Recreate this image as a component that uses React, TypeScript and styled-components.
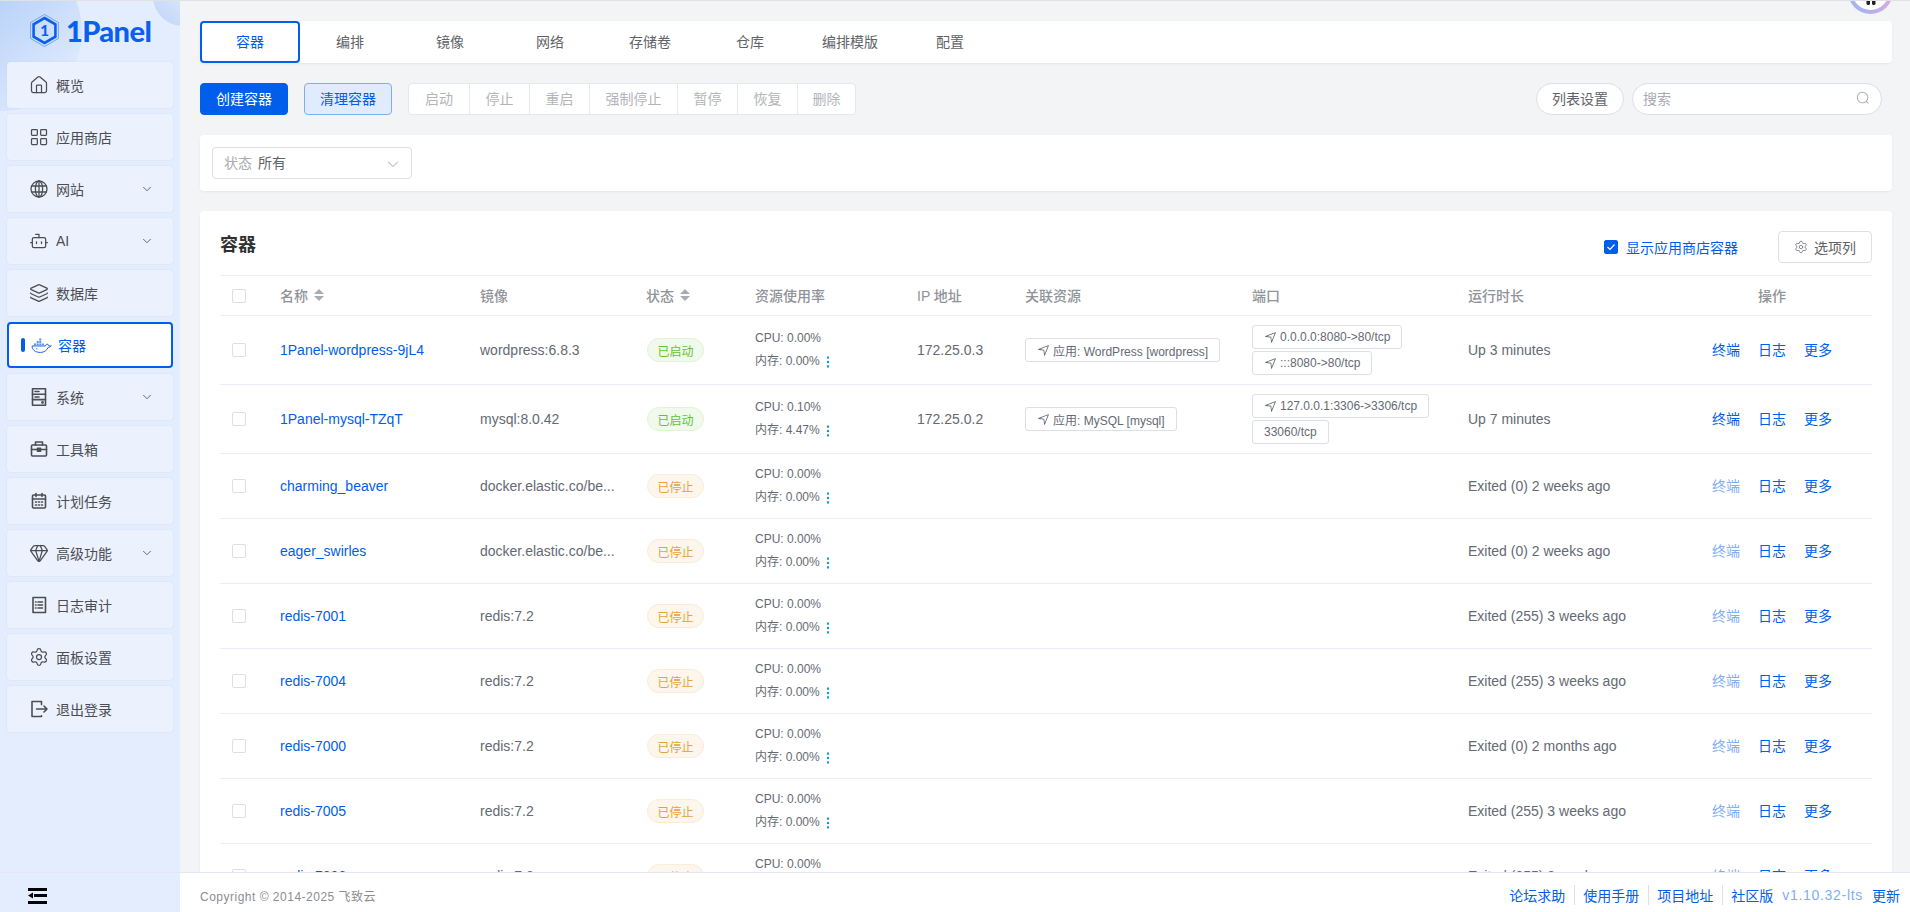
import React from 'react';
import styled, { createGlobalStyle } from 'styled-components';
import { House, LayoutGrid, Bot, Layers, Gem, Settings, ChevronDown } from 'lucide-react';

const Global = createGlobalStyle`
  * { box-sizing: border-box; }
  html, body { margin: 0; height: 100%; }
  body { font-family: "Liberation Sans", "Noto Sans CJK SC", sans-serif; font-size: 14px; color: #646a73; overflow: hidden; }
`;

const Shell = styled.div`
  height: 912px; display: flex; flex-direction: column; position: relative; overflow: hidden;
  border-top: 1px solid #dfe1e5; background: #f3f4f5;
`;
const Body = styled.div`display: flex; flex: 1; min-height: 0;`;
const Sidebar = styled.aside`
  width: 180px; flex: none; background: #e3edfd; position: relative; overflow: hidden;
  padding: 0 7px;
  &::before { content: ""; position: absolute; left: -78px; top: -50px; width: 160px; height: 160px; border-radius: 50%;
    background: linear-gradient(135deg, #a9c9f8 20%, #e2ecfd 90%); }
  &::after { content: ""; position: absolute; left: 153px; top: -35px; width: 60px; height: 60px; border-radius: 50%;
    background: linear-gradient(45deg, #c3d7f9 10%, #e3edfd 70%); }
`;
const Logo = styled.div`
  position: relative; z-index: 1; height: 61px; display: flex; align-items: center; padding: 0 0 2px 23px; gap: 7px;
`;
const LogoText = styled.span`
  font-family: Lato, sans-serif; font-weight: 900; font-size: 29px; color: #0b5fee; line-height: 1; letter-spacing: -0.6px;
`;
const Nav = styled.nav`position: relative; z-index: 1; display: flex; flex-direction: column; gap: 6px;`;
const NavItem = styled.div<{ $active?: boolean }>`
  height: 46px; border-radius: 4px; display: flex; align-items: center; position: relative;
  padding-left: ${p => (p.$active ? '22px' : '23px')}; gap: ${p => (p.$active ? '6px' : '8px')};
  background: ${p => (p.$active ? '#fff' : '#ebf2fe')};
  border: ${p => (p.$active ? '2px solid #005eeb' : 'none')};
  color: ${p => (p.$active ? '#005eeb' : '#4b4d52')};
  box-shadow: ${p => (p.$active ? 'none' : '0 0 2px rgba(190,210,245,.55)')};
  svg.i { flex: none; width: 18px; height: 18px; }
  svg.lu { flex: none; width: 20px; height: 20px; margin: 0 -1px; }
`;
const ActiveBar = styled.span`
  position: absolute; left: 12px; top: 14px; width: 4px; height: 14px; border-radius: 2px; background: #005eeb;
`;
const Chevron = styled(ChevronDown)`position: absolute; right: 19px; top: 16px; width: 14px; height: 14px; color: #55585e; stroke-width: 1.5;`;

const Content = styled.main`flex: 1; min-width: 0; padding: 20px 18px 0 20px; overflow: hidden;`;
const Panel = styled.div`background: #fff; border-radius: 4px; box-shadow: 0 1px 2px rgba(225,228,236,.8);`;
const Tabs = styled(Panel)`height: 42px; display: flex;`;
const Tab = styled.div<{ $active?: boolean }>`
  width: 100px; display: flex; align-items: center; justify-content: center; font-size: 14px; padding-bottom: 2px;
  color: ${p => (p.$active ? '#005eeb' : '#5f6368')};
  ${p => p.$active && 'border: 2px solid #005eeb; border-radius: 4px;'}
`;
const Toolbar = styled.div`display: flex; align-items: center; height: 32px; margin-top: 20px;`;
const Btn = styled.div<{ $kind: 'primary' | 'soft' }>`
  height: 32px; width: 88px; border-radius: 4px; display: flex; align-items: center; justify-content: center; margin-right: 16px; padding-bottom: 2px;
  background: ${p => (p.$kind === 'primary' ? '#005eeb' : '#e0ebfd')};
  color: ${p => (p.$kind === 'primary' ? '#fff' : '#005eeb')};
  border: 1px solid ${p => (p.$kind === 'primary' ? '#005eeb' : '#80aef5')};
`;
const Group = styled.div`display: flex; height: 32px; background: #fff; border: 1px solid #e4e7ed; border-radius: 4px;`;
const GroupBtn = styled.div<{ $w: number }>`
  width: ${p => p.$w}px; display: flex; align-items: center; justify-content: center; color: #b3b5ba; font-size: 14px; padding-bottom: 2px;
  & + & { border-left: 1px solid #e4e7ed; }
`;
const Spacer = styled.div`flex: 1;`;
const PillBtn = styled.div`
  width: 88px; height: 32px; border: 1px solid #dcdfe6; border-radius: 16px; background: #fff; display: flex; align-items: center; justify-content: center; color: #5f6368; padding-bottom: 2px;
`;
const Search = styled.div`
  width: 250px; height: 32px; margin: 0 10px 0 8px; border: 1px solid #dcdfe6; border-radius: 16px; background: #fff;
  display: flex; align-items: center; justify-content: space-between; padding: 0 11px 2px 10px; color: #a8abb2;
`;
const FilterCard = styled(Panel)`height: 56px; margin-top: 20px; padding: 12px;`;
const Select = styled.div`
  width: 200px; height: 32px; border: 1px solid #dcdfe6; border-radius: 4px; display: flex; align-items: center; padding: 0 11px 2px; position: relative; color: #5f6368;
`;
const SelectLabel = styled.span`color: #a8abb2; margin-right: 6px;`;
const SelectArrow = styled.svg`position: absolute; right: 11px; top: 9px; width: 14px; height: 14px; fill: #a8abb2;`;
const TableCard = styled(Panel)`margin-top: 20px; padding: 20px 20px 0; height: 800px;`;
const CardHead = styled.div`display: flex; align-items: center; height: 32px; margin-bottom: 12px;`;
const Title = styled.h2`margin: 0; padding-bottom: 8px; font-size: 18px; font-weight: 700; color: #303133; flex: 1;`;
const Box = styled.span<{ $checked?: boolean }>`
  display: inline-flex; align-items: center; justify-content: center; width: 14px; height: 14px; border-radius: 2px; flex: none;
  background: ${p => (p.$checked ? '#005eeb' : '#fff')};
  border: 1px solid ${p => (p.$checked ? '#005eeb' : '#dcdfe6')};
`;
const AppStore = styled.div`display: flex; align-items: center; gap: 8px; color: #005eeb; margin-right: 40px; padding-bottom: 1px;`;
const ColumnsBtn = styled.div`
  width: 94px; height: 32px; border: 1px solid #dcdfe6; border-radius: 4px; display: flex; align-items: center; justify-content: center; gap: 6px; color: #5f6368; padding-bottom: 1px;
`;
const cols = '60px 200px 166px 109px 162px 108px 227px 216px 244px 160px';
const Head = styled.div`
  display: grid; grid-template-columns: ${cols}; height: 41px; align-items: center; border-top: 1px solid #ebeef5; border-bottom: 1px solid #ebeef5;
  color: #909399; font-weight: 500;
`;
const HeadCell = styled.div<{ $pad?: number }>`display: flex; align-items: center; gap: 6px; padding: 0 0 2px ${p => p.$pad ?? 0}px;`;
const CheckCell = styled.div`padding-left: 12px; display: flex; align-items: center;`;
const Row = styled.div<{ $h: number }>`
  display: grid; grid-template-columns: ${cols}; height: ${p => p.$h}px; align-items: center; border-bottom: 1px solid #ebeef5;
`;
const Name = styled.div`color: #005eeb;`;
const Status = styled.span<{ $on: boolean }>`
  display: inline-flex; width: 57px; height: 24px; border-radius: 12px; align-items: center; justify-content: center; font-size: 12px; margin-left: 1px;
  background: ${p => (p.$on ? '#f0f9eb' : '#fdf6ec')};
  border: 1px solid ${p => (p.$on ? '#e1f3d8' : '#faecd8')};
  color: ${p => (p.$on ? '#67c23a' : '#e6a23c')};
`;
const Usage = styled.div`font-size: 12px; line-height: 23px; color: #646a73;`;
const UsageLine = styled.div`display: flex; align-items: center; gap: 4px;`;
const Stack = styled.div`display: flex; flex-direction: column; align-items: flex-start; gap: 2px;`;
const Chip = styled.span`
  display: inline-flex; align-items: center; gap: 3px; height: 24px; padding: 0 11px; border: 1px solid #dcdfe6; border-radius: 3px; font-size: 12px; color: #646a73; white-space: nowrap; background: #fff;
`;
const Ops = styled.div`display: flex; gap: 18px; padding-bottom: 2px;`;
const Op = styled.span<{ $dim?: boolean }>`color: ${p => (p.$dim ? '#80aef5' : '#005eeb')}; white-space: nowrap;`;

const Foot = styled.footer`height: 40px; flex: none; display: flex; border-top: 1px solid #e4e7ed; background: #fff;`;
const SideFoot = styled.div`width: 180px; background: #e3edfd; display: flex; align-items: center; padding: 7px 0 0 28px;`;
const PageFoot = styled.div`flex: 1; display: flex; align-items: center; justify-content: space-between; padding: 5px 10px 0 20px;`;
const Copy = styled.span`font-size: 12px; color: #8a8d93; letter-spacing: .5px;`;
const Links = styled.div`display: flex; align-items: center; color: #005eeb;`;
const Link = styled.span`padding: 0 9px 0 8px; & + & { border-left: 1px solid #dcdfe6; }`;
const Version = styled.span`color: #80aef5; margin: 0 9px 0 0; letter-spacing: .7px;`;

const Avatar = styled.div`
  position: absolute; left: 1848px; top: -32px; width: 45px; height: 45px; border-radius: 50%;
  background: conic-gradient(#f0a8d0 0deg, #e7a9dc 90deg, #a9b3ee 200deg, #a9b3ee 270deg, #f0a8d0 360deg);
  display: flex; align-items: center; justify-content: center;
  &::before { content: ""; position: absolute; inset: 4px; background: #fff; border-radius: 50%; }
`;
const AvatarMark = styled.svg`position: absolute; left: 17px; top: 30px; width: 12px; height: 6px;`;

const Position = ({ s = 13 }: { s?: number }) => (
  <svg width={s} height={s} viewBox="0 0 1024 1024" fill="currentColor">
    <path d="m249.6 417.088 319.744 43.072 39.168 310.272L845.12 178.88 249.6 417.088zm-129.024 47.168a32 32 0 0 1-7.68-61.44l777.792-311.04a32 32 0 0 1 41.6 41.6l-310.336 775.68a32 32 0 0 1-61.44-7.808L512 516.992l-391.424-52.736z" />
  </svg>
);
const Dots = () => (
  <svg width="8" height="12" viewBox="0 0 8 12" fill="#0a9be8"><rect x="3" y="0.5" width="2" height="2.2" /><rect x="3" y="4.9" width="2" height="2.2" /><rect x="3" y="9.3" width="2" height="2.2" /></svg>
);
const Sort = () => (
  <svg width="10" height="12" viewBox="0 0 10 12" fill="#a8abb2"><path d="M5 0 10 5H0z" /><path d="M5 12 0 7h10z" /></svg>
);
const stroke = { fill: 'none', stroke: 'currentColor', strokeWidth: 1.6, strokeLinejoin: 'round' as const, strokeLinecap: 'round' as const };
const Globe = () => (
  <svg className="i" viewBox="0 0 18 18" {...stroke} strokeWidth={1.3}><circle cx="9" cy="9" r="8" /><ellipse cx="9" cy="9" rx="3.6" ry="8" /><path d="M9 1v16M1.6 6h14.8M1.6 12h14.8" /></svg>
);
const Docker = () => (
  <svg width="21" height="15" viewBox="0 0 22 16" fill="none" stroke="#005eeb" strokeWidth="1" strokeLinejoin="round">
    <path d="M1 8.5h14c.5-1.2 1.4-2 2.5-2 .3 1 .9 1.6 1.6 1.9 1 .3 1.7 0 2.3-.3-.8 1.4-2 1.9-3.3 1.9-1.4 3.3-4.4 5.4-8.2 5.4C4.2 15.4 1 12.6 1 8.5z" />
    <g fill="#5d97f2" stroke="none"><rect x="3" y="5.8" width="2.2" height="2.2" /><rect x="5.8" y="5.8" width="2.2" height="2.2" /><rect x="8.6" y="5.8" width="2.2" height="2.2" /><rect x="11.4" y="5.8" width="2.2" height="2.2" /><rect x="5.8" y="3.1" width="2.2" height="2.2" /><rect x="8.6" y="3.1" width="2.2" height="2.2" /><rect x="8.6" y="0.4" width="2.2" height="2.2" /></g>
    <circle cx="6" cy="11.5" r=".7" fill="#005eeb" stroke="none" />
  </svg>
);
const Server = () => (
  <svg className="i" viewBox="0 0 18 18" {...stroke}><rect x="2.5" y="0.8" width="13" height="16.4" /><path d="M2.5 6.2h13M2.5 11.6h13M5 3.5h4M5 9h4" /><circle cx="12.5" cy="14.5" r=".6" /></svg>
);
const Toolbox = () => (
  <svg className="i" viewBox="0 0 18 18" {...stroke}><rect x="1.5" y="5" width="15" height="11" rx="1" /><path d="M5.5 5V2h7v3M1.5 9.5h15" /><rect x="7.5" y="8.3" width="3" height="3" fill="currentColor" /></svg>
);
const Calendar = () => (
  <svg className="i" viewBox="0 0 18 18" {...stroke}><rect x="2.5" y="3" width="13" height="13" rx="1" /><path d="M2.5 7h13M6 1.5v3M12 1.5v3" /><path d="M5.5 10h1M8.5 10h1M11.5 10h1M5.5 13h1M8.5 13h1M11.5 13h1" /></svg>
);
const Doc = () => (
  <svg className="i" viewBox="0 0 18 18" {...stroke}><path d="M3 1.5h12.5v15H3z" /><path d="M8 6h4.5M8 9h4.5M8 12h4.5M5.5 6h.6M5.5 9h.6M5.5 12h.6" /></svg>
);
const Logout = () => (
  <svg className="i" viewBox="0 0 18 18" {...stroke}><path d="M11.5 4.5V1.5H2v15h9.5v-.8" /><path d="M6.5 9H17M14 6l3 3-3 3" /></svg>
);
const LogoMark = () => (
  <svg width="29" height="33" viewBox="0 0 29 33">
    <path d="M14.5.5 28.4 8.5v16L14.5 32.5.6 24.5v-16z" fill="none" stroke="#5b97f5" strokeWidth=".8" />
    <path d="M14.5 4 25.4 10.3v12.4L14.5 29 3.6 22.7V10.3z" fill="none" stroke="#0b5fee" strokeWidth="2.6" />
    <text x="14.5" y="22" textAnchor="middle" fontFamily="Lato, sans-serif" fontWeight="900" fontSize="15" fill="#0b5fee">1</text>
  </svg>
);
const Collapse = () => (
  <svg width="20" height="16" viewBox="0 0 20 16" fill="#000"><rect x="0" y="0" width="19" height="3" /><rect x="6" y="6" width="13" height="3" /><path d="M0 7.5 5 4.5v6z" /><rect x="0" y="13" width="19" height="3" /></svg>
);
const Arrow = () => (
  <path d="M831.872 340.864 512 652.672 192.128 340.864a30.592 30.592 0 0 0-42.752 0 29.12 29.12 0 0 0 0 41.6L489.664 714.24a32 32 0 0 0 44.672 0l340.288-331.712a29.12 29.12 0 0 0 0-41.728 30.592 30.592 0 0 0-42.752 0z" />
);

type N = { label: string; icon: React.ReactNode; more?: boolean; active?: boolean };
const iconProps = { className: 'lu', strokeWidth: 1.5 };
const navs: N[] = [
  { label: '概览', icon: <House {...iconProps} /> },
  { label: '应用商店', icon: <LayoutGrid {...iconProps} /> },
  { label: '网站', icon: <Globe />, more: true },
  { label: 'AI', icon: <Bot {...iconProps} />, more: true },
  { label: '数据库', icon: <Layers {...iconProps} /> },
  { label: '容器', icon: <Docker />, active: true },
  { label: '系统', icon: <Server />, more: true },
  { label: '工具箱', icon: <Toolbox /> },
  { label: '计划任务', icon: <Calendar /> },
  { label: '高级功能', icon: <Gem {...iconProps} />, more: true },
  { label: '日志审计', icon: <Doc /> },
  { label: '面板设置', icon: <Settings {...iconProps} /> },
  { label: '退出登录', icon: <Logout /> },
];
const tabs = ['容器', '编排', '镜像', '网络', '存储卷', '仓库', '编排模版', '配置'];
const actions: [string, number][] = [['启动', 60], ['停止', 60], ['重启', 60], ['强制停止', 88], ['暂停', 60], ['恢复', 60], ['删除', 58]];
const redis = (name: string, up: string) => ({ name, image: 'redis:7.2', on: false, cpu: '0.00%', mem: '0.00%', up });
const rows: { name: string; image: string; on: boolean; cpu: string; mem: string; up: string; ip?: string; app?: string; ports?: { t: string; plain?: boolean }[] }[] = [
  { name: '1Panel-wordpress-9jL4', image: 'wordpress:6.8.3', on: true, cpu: '0.00%', mem: '0.00%', up: 'Up 3 minutes', ip: '172.25.0.3', app: '应用: WordPress [wordpress]', ports: [{ t: '0.0.0.0:8080->80/tcp' }, { t: ':::8080->80/tcp' }] },
  { name: '1Panel-mysql-TZqT', image: 'mysql:8.0.42', on: true, cpu: '0.10%', mem: '4.47%', up: 'Up 7 minutes', ip: '172.25.0.2', app: '应用: MySQL [mysql]', ports: [{ t: '127.0.0.1:3306->3306/tcp' }, { t: '33060/tcp', plain: true }] },
  { name: 'charming_beaver', image: 'docker.elastic.co/be...', on: false, cpu: '0.00%', mem: '0.00%', up: 'Exited (0) 2 weeks ago' },
  { name: 'eager_swirles', image: 'docker.elastic.co/be...', on: false, cpu: '0.00%', mem: '0.00%', up: 'Exited (0) 2 weeks ago' },
  redis('redis-7001', 'Exited (255) 3 weeks ago'),
  redis('redis-7004', 'Exited (255) 3 weeks ago'),
  redis('redis-7000', 'Exited (0) 2 months ago'),
  redis('redis-7005', 'Exited (255) 3 weeks ago'),
  redis('redis-7006', 'Exited (255) 3 weeks ago'),
];

export default function App() {
  return (
    <Shell>
      <Global />
      <Body>
        <Sidebar>
          <Logo><LogoMark /><LogoText>1Panel</LogoText></Logo>
          <Nav>
            {navs.map(n => (
              <NavItem key={n.label} $active={n.active}>
                {n.active && <ActiveBar />}
                {n.icon}
                <span>{n.label}</span>
                {n.more && <Chevron />}
              </NavItem>
            ))}
          </Nav>
        </Sidebar>
        <Content>
          <Tabs>{tabs.map((t, i) => <Tab key={t} $active={i === 0}>{t}</Tab>)}</Tabs>
          <Toolbar>
            <Btn $kind="primary">创建容器</Btn>
            <Btn $kind="soft">清理容器</Btn>
            <Group>{actions.map(([t, w]) => <GroupBtn key={t} $w={w}>{t}</GroupBtn>)}</Group>
            <Spacer />
            <PillBtn>列表设置</PillBtn>
            <Search>
              <span>搜索</span>
              <svg width="14" height="14" viewBox="0 0 1024 1024" fill="#a8abb2"><path d="m795.904 750.72 124.992 124.928a32 32 0 0 1-45.248 45.248L750.656 795.904a416 416 0 1 1 45.248-45.248zM480 832a352 352 0 1 0 0-704 352 352 0 0 0 0 704z" /></svg>
            </Search>
          </Toolbar>
          <FilterCard>
            <Select>
              <SelectLabel>状态</SelectLabel>所有
              <SelectArrow viewBox="0 0 1024 1024"><Arrow /></SelectArrow>
            </Select>
          </FilterCard>
          <TableCard>
            <CardHead>
              <Title>容器</Title>
              <AppStore>
                <Box $checked><svg width="10" height="10" viewBox="0 0 10 10" fill="none" stroke="#fff" strokeWidth="1.2"><path d="M1.5 5 4 7.5 8.5 2.5" /></svg></Box>
                显示应用商店容器
              </AppStore>
              <ColumnsBtn><Settings size={14} strokeWidth={1.5} color="#7a7d83" />选项列</ColumnsBtn>
            </CardHead>
            <Head>
              <CheckCell><Box /></CheckCell>
              <HeadCell>名称<Sort /></HeadCell>
              <HeadCell>镜像</HeadCell>
              <HeadCell>状态<Sort /></HeadCell>
              <HeadCell>资源使用率</HeadCell>
              <HeadCell>IP 地址</HeadCell>
              <HeadCell>关联资源</HeadCell>
              <HeadCell>端口</HeadCell>
              <HeadCell>运行时长</HeadCell>
              <HeadCell $pad={46}>操作</HeadCell>
            </Head>
            {rows.map((r, i) => (
              <Row key={r.name} $h={i < 2 ? 69 : 65}>
                <CheckCell><Box /></CheckCell>
                <Name>{r.name}</Name>
                <div>{r.image}</div>
                <div><Status $on={r.on}>{r.on ? '已启动' : '已停止'}</Status></div>
                <Usage>
                  <div>CPU: {r.cpu}</div>
                  <UsageLine>内存: {r.mem} <Dots /></UsageLine>
                </Usage>
                <div>{r.ip}</div>
                <div>{r.app && <Chip><Position />{r.app}</Chip>}</div>
                <Stack>{r.ports?.map(p => <Chip key={p.t}>{!p.plain && <Position />}{p.t}</Chip>)}</Stack>
                <div>{r.up}</div>
                <Ops><Op $dim={!r.on}>终端</Op><Op>日志</Op><Op>更多</Op></Ops>
              </Row>
            ))}
          </TableCard>
        </Content>
      </Body>
      <Foot>
        <SideFoot><Collapse /></SideFoot>
        <PageFoot>
          <Copy>Copyright © 2014-2025 飞致云</Copy>
          <Links>
            <Link>论坛求助</Link>
            <Link>使用手册</Link>
            <Link>项目地址</Link>
            <Link>社区版</Link>
            <Version>v1.10.32-lts</Version>
            <span>更新</span>
          </Links>
        </PageFoot>
      </Foot>
      <Avatar>
        <AvatarMark viewBox="0 0 12 6" fill="#222"><rect x="1.5" width="3.5" height="6" rx="1.5" /><rect x="7" width="3.5" height="6" rx="1.5" /></AvatarMark>
      </Avatar>
    </Shell>
  );
}
